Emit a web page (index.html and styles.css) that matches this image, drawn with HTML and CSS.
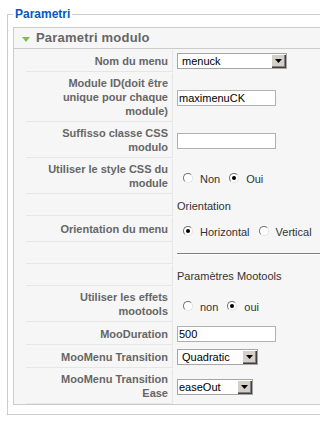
FILE: index.html
```html
<!DOCTYPE html>
<html lang="fr">
<head>
  <meta charset="UTF-8" />
  <title>Parametri</title>
  <link rel="stylesheet" href="styles.css">
</head>
<body>

  <fieldset class="params">
    <legend>Parametri</legend>

    <div class="panel">
      <h3 class="panel-title"><span class="arrow"></span>Parametri modulo</h3>

      <div class="paramlist">
        <div class="row">
          <div class="key">Nom du menu</div>
          <div class="value">
            <div class="select select-menu"><span class="select-text">menuck</span><span class="select-btn"><svg width="7" height="4" viewBox="0 0 7 4"><polygon points="0,0 7,0 3.5,4" fill="#000"/></svg></span></div>
          </div>
        </div>

        <div class="row">
          <div class="key">Module ID(doit être unique pour chaque module)</div>
          <div class="value"><input class="text" type="text" value="maximenuCK"></div>
        </div>

        <div class="row">
          <div class="key">Suffisso classe CSS modulo</div>
          <div class="value"><input class="text" type="text" value=""></div>
        </div>

        <div class="row">
          <div class="key">Utiliser le style CSS du module</div>
          <div class="value">
            <div class="choices">
              <label class="choice"><span class="radio"></span>Non</label>
              <label class="choice"><span class="radio checked"></span>Oui</label>
            </div>
          </div>
        </div>

        <div class="row">
          <div class="key"></div>
          <div class="value">Orientation</div>
        </div>

        <div class="row">
          <div class="key">Orientation du menu</div>
          <div class="value">
            <div class="choices">
              <label class="choice"><span class="radio checked"></span>Horizontal</label>
              <label class="choice"><span class="radio"></span>Vertical</label>
            </div>
          </div>
        </div>

        <div class="row">
          <div class="key"></div>
          <div class="value"><div class="divider"></div></div>
        </div>

        <div class="row">
          <div class="key"></div>
          <div class="value">Paramètres Mootools</div>
        </div>

        <div class="row">
          <div class="key">Utiliser les effets mootools</div>
          <div class="value">
            <div class="choices">
              <label class="choice"><span class="radio"></span>non</label>
              <label class="choice"><span class="radio checked"></span>oui</label>
            </div>
          </div>
        </div>

        <div class="row">
          <div class="key">MooDuration</div>
          <div class="value"><input class="text" type="text" value="500"></div>
        </div>

        <div class="row">
          <div class="key">MooMenu Transition</div>
          <div class="value">
            <div class="select select-trans"><span class="select-text">Quadratic</span><span class="select-btn"><svg width="7" height="4" viewBox="0 0 7 4"><polygon points="0,0 7,0 3.5,4" fill="#000"/></svg></span></div>
          </div>
        </div>

        <div class="row">
          <div class="key">MooMenu Transition Ease</div>
          <div class="value">
            <div class="select select-ease"><span class="select-text">easeOut</span><span class="select-btn"><svg width="7" height="4" viewBox="0 0 7 4"><polygon points="0,0 7,0 3.5,4" fill="#000"/></svg></span></div>
          </div>
        </div>
      </div>
    </div>
  </fieldset>

</body>
</html>
```

FILE: styles.css
```css
html, body {
  overflow: hidden;
}

body {
  margin: 7px 0 0 7px;
  width: 360px;
  background: #fff;
  font-family: 'Liberation Sans', Arial, sans-serif;
  font-size: 11px;
  color: #333;
}

.params {
  margin: 0;
  padding: 6px 0 9px 5px;
  border: 1px solid #ccc;
  width: 340px;
  box-sizing: border-box;
}

.params legend {
  padding: 0 2px;
  font-size: 12px;
  line-height: 14px;
  font-weight: bold;
  color: #0b55c4;
}

.panel {
  border: 1px solid #ccc;
  background: #f6f6f6;
}

.panel-title {
  margin: 0;
  height: 20px;
  display: flex;
  align-items: center;
  padding-left: 8px;
  border-bottom: 1px solid #ccc;
  font-size: 13px;
  line-height: 20px;
  font-weight: bold;
  letter-spacing: 0.2px;
  color: #666;
}

.arrow {
  width: 0;
  height: 0;
  margin: 2px 6px 0 0;
  border-left: 4px solid transparent;
  border-right: 4px solid transparent;
  border-top: 5px solid #7fbf4d;
}

.paramlist {
  display: flex;
  flex-direction: column;
  gap: 1px;
  padding: 1px 0 0 12px;
}

.row {
  display: flex;
  gap: 1px;
}

.key {
  width: 147px;
  min-height: 21px;
  box-sizing: border-box;
  padding: 3px 4px 3px 12px;
  display: flex;
  align-items: center;
  justify-content: flex-end;
  text-align: right;
  border-right: 1px solid #e6e6e6;
  border-bottom: 1px solid #e6e6e6;
  font-weight: bold;
  line-height: 14px;
  color: #666;
}

.value {
  flex: 1;
  padding: 3px;
  display: flex;
  align-items: center;
  line-height: 14px;
}

.text {
  width: 99px;
  height: 16px;
  box-sizing: border-box;
  margin: 0;
  padding: 0 1px;
  border: 1px solid #b0b0b0;
  background: #fff;
  font-family: 'Liberation Sans', Arial, sans-serif;
  font-size: 11px;
  color: #000;
  outline: none;
}

.select {
  display: flex;
  height: 16px;
  box-sizing: border-box;
  border: 1px solid #a5a5a5;
  background: #fff;
  color: #000;
}

.select-menu { width: 110px; }
.select-trans { width: 81px; }
.select-ease { width: 76px; }

.select-text {
  flex: 1;
  padding-left: 4px;
  line-height: 14px;
}

.select-ease .select-text {
  padding-left: 1px;
}

.select-btn {
  width: 15px;
  display: flex;
  align-items: center;
  justify-content: center;
  background: #d4d0c8;
  box-shadow: inset 1px 1px #fff, inset -1px -1px #404040, inset -2px -2px #808080;
}

.choices {
  display: flex;
  padding-top: 5px;
}

.choice {
  display: flex;
  align-items: flex-start;
  margin-right: 3px;
}

.radio {
  width: 10px;
  height: 10px;
  box-sizing: border-box;
  margin: 1px 7px 0 6px;
  border-radius: 50%;
  border: 1px solid;
  border-color: #707070 #e4e4e4 #e4e4e4 #707070;
  background: #fff;
  display: flex;
  align-items: center;
  justify-content: center;
}

.radio.checked::after {
  content: "";
  width: 4px;
  height: 4px;
  border-radius: 50%;
  background: #000;
}

.divider {
  flex: 1;
  border-top: 1px solid #808080;
  border-bottom: 1px solid #fff;
}
```
